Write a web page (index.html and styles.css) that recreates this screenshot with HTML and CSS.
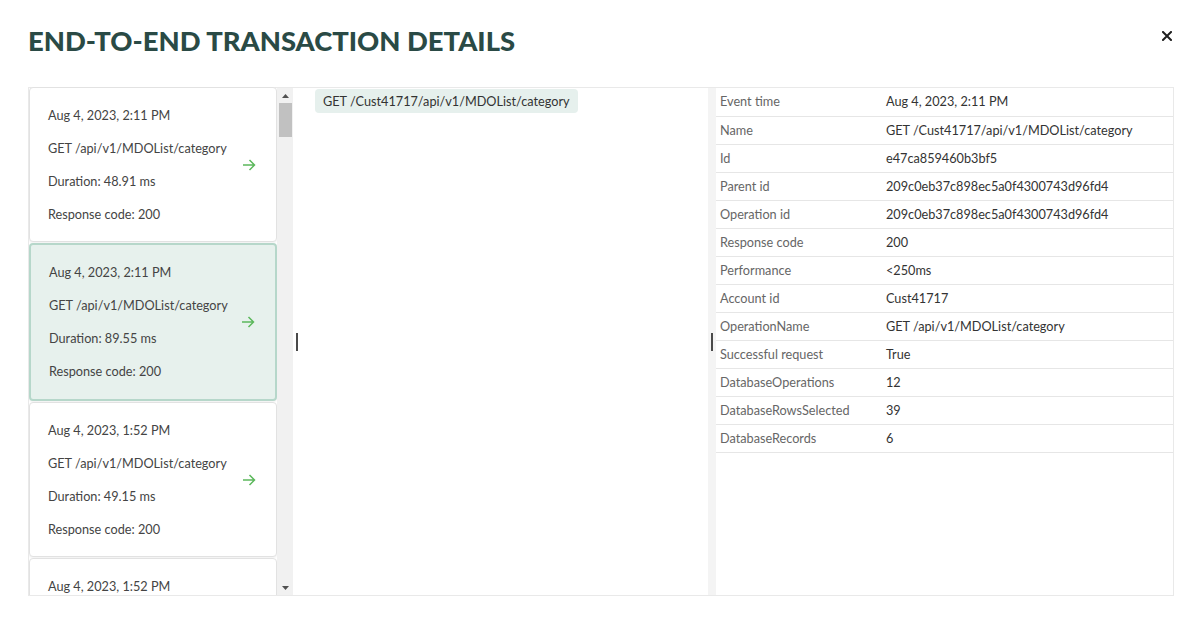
FILE: index.html
```html
<!DOCTYPE html>
<html lang="en">
<head>
<meta charset="utf-8">
<title>End-to-end transaction details</title>
<link rel="stylesheet" href="styles.css">
</head>
<body>
<div class="header">
  <h1 class="title">END-TO-END TRANSACTION DETAILS</h1>
  <button class="close" aria-label="Close">
    <svg width="10" height="10" viewBox="0 0 10 10"><path d="M1 1 L9 9 M9 1 L1 9" stroke="#1f1f1f" stroke-width="2" stroke-linecap="square"/></svg>
  </button>
</div>
<div class="frame">
  <div class="list">
    <div class="card">
      <div class="card-lines">
        <div class="line">Aug 4, 2023, 2:11 PM</div>
        <div class="line">GET /api/v1/MDOList/category</div>
        <div class="line">Duration: 48.91 ms</div>
        <div class="line">Response code: 200</div>
      </div>
      <svg class="arrow" width="14" height="12" viewBox="0 0 14 12"><path d="M1 6 H12.5 M7.5 1 L12.5 6 L7.5 11" fill="none" stroke="#5cb85c" stroke-width="1.5"/></svg>
    </div>
    <div class="card selected">
      <div class="card-lines">
        <div class="line">Aug 4, 2023, 2:11 PM</div>
        <div class="line">GET /api/v1/MDOList/category</div>
        <div class="line">Duration: 89.55 ms</div>
        <div class="line">Response code: 200</div>
      </div>
      <svg class="arrow" width="14" height="12" viewBox="0 0 14 12"><path d="M1 6 H12.5 M7.5 1 L12.5 6 L7.5 11" fill="none" stroke="#5cb85c" stroke-width="1.5"/></svg>
    </div>
    <div class="card">
      <div class="card-lines">
        <div class="line">Aug 4, 2023, 1:52 PM</div>
        <div class="line">GET /api/v1/MDOList/category</div>
        <div class="line">Duration: 49.15 ms</div>
        <div class="line">Response code: 200</div>
      </div>
      <svg class="arrow" width="14" height="12" viewBox="0 0 14 12"><path d="M1 6 H12.5 M7.5 1 L12.5 6 L7.5 11" fill="none" stroke="#5cb85c" stroke-width="1.5"/></svg>
    </div>
    <div class="card">
      <div class="card-lines">
        <div class="line">Aug 4, 2023, 1:52 PM</div>
        <div class="line">GET /api/v1/MDOList/category</div>
        <div class="line">Duration: 51.02 ms</div>
        <div class="line">Response code: 200</div>
      </div>
      <svg class="arrow" width="14" height="12" viewBox="0 0 14 12"><path d="M1 6 H12.5 M7.5 1 L12.5 6 L7.5 11" fill="none" stroke="#5cb85c" stroke-width="1.5"/></svg>
    </div>
  </div>
  <div class="scrollbar">
    <div class="sb-btn"><svg width="7" height="4" viewBox="0 0 7 4"><path d="M0 4 L3.5 0 L7 4 Z" fill="#505050"/></svg></div>
    <div class="sb-thumb"></div>
    <div class="sb-fill"></div>
    <div class="sb-btn"><svg width="7" height="4" viewBox="0 0 7 4"><path d="M0 0 L7 0 L3.5 4 Z" fill="#505050"/></svg></div>
  </div>
  <div class="gutter"><span class="handle"></span></div>
  <div class="middle">
    <span class="pill">GET /Cust41717/api/v1/MDOList/category</span>
  </div>
  <div class="gutter gutter-gray"><span class="handle"></span></div>
  <div class="details">
    <table class="props">
      <tr><td class="k">Event time</td><td class="v">Aug 4, 2023, 2:11 PM</td></tr>
      <tr><td class="k">Name</td><td class="v">GET /Cust41717/api/v1/MDOList/category</td></tr>
      <tr><td class="k">Id</td><td class="v">e47ca859460b3bf5</td></tr>
      <tr><td class="k">Parent id</td><td class="v">209c0eb37c898ec5a0f4300743d96fd4</td></tr>
      <tr><td class="k">Operation id</td><td class="v">209c0eb37c898ec5a0f4300743d96fd4</td></tr>
      <tr><td class="k">Response code</td><td class="v">200</td></tr>
      <tr><td class="k">Performance</td><td class="v">&lt;250ms</td></tr>
      <tr><td class="k">Account id</td><td class="v">Cust41717</td></tr>
      <tr><td class="k">OperationName</td><td class="v">GET /api/v1/MDOList/category</td></tr>
      <tr><td class="k">Successful request</td><td class="v">True</td></tr>
      <tr><td class="k">DatabaseOperations</td><td class="v">12</td></tr>
      <tr><td class="k">DatabaseRowsSelected</td><td class="v">39</td></tr>
      <tr><td class="k">DatabaseRecords</td><td class="v">6</td></tr>
    </table>
  </div>
</div>
</body>
</html>
```

FILE: styles.css
```css
* { box-sizing: border-box; }

html, body {
  margin: 0;
  padding: 0;
  background: #ffffff;
  font-family: Lato, "Liberation Sans", sans-serif;
  font-size: 12.7px;
  color: #444444;
}

.header {
  display: flex;
  justify-content: space-between;
  align-items: flex-start;
  height: 87px;
  padding: 24px 28px 0 28px;
}

.title {
  margin: 0;
  font-size: 27.4px;
  line-height: 34px;
  font-weight: 900;
  color: #2a4a45;
  letter-spacing: 0;
}

.close {
  margin-top: 7px;
  padding: 0;
  border: 0;
  background: none;
  width: 10px;
  height: 10px;
  display: flex;
  cursor: pointer;
}

.frame {
  display: flex;
  margin: 0 26px 0 28px;
  height: 509px;
  border: 1px solid #e9e9e9;
}

.list {
  width: 248px;
  flex: none;
  margin-top: -1px;
  overflow: hidden;
  display: flex;
  flex-direction: column;
}

.card {
  flex: none;
  height: 155px;
  margin-bottom: 1px;
  display: flex;
  align-items: center;
  justify-content: space-between;
  padding: 0 20px 0 18px;
  background: #ffffff;
  border: 1px solid #e2e2e2;
  border-radius: 4px;
  box-shadow: 0 1px 2px rgba(0, 0, 0, 0.06);
}

.card.selected {
  height: 158px;
  background: #e7f1ed;
  border: 2px solid #b6d7ca;
}

.card-lines {
  display: flex;
  flex-direction: column;
}

.line {
  height: 33px;
  line-height: 33px;
  color: #444444;
  white-space: nowrap;
}

.arrow { flex: none; }

.scrollbar {
  width: 16px;
  flex: none;
  background: #f1f1f1;
  display: flex;
  flex-direction: column;
  align-items: center;
}

.sb-btn {
  height: 15px;
  width: 16px;
  display: flex;
  align-items: center;
  justify-content: center;
}

.sb-thumb {
  width: 13px;
  height: 34px;
  background: #c1c1c1;
}

.sb-fill { flex: 1; }

.gutter {
  width: 7px;
  flex: none;
  display: flex;
  align-items: center;
  justify-content: center;
  background: #ffffff;
}

.gutter-gray {
  width: 8px;
  background: #f4f4f4;
  justify-content: flex-start;
  padding-left: 3px;
}

.handle {
  display: block;
  width: 2px;
  height: 18px;
  background: #4a4a4a;
}

.middle {
  width: 408px;
  flex: none;
  padding: 1px 0 0 15px;
  background: #ffffff;
}

.pill {
  display: inline-block;
  height: 24px;
  line-height: 24px;
  padding: 0 8px;
  border-radius: 4px;
  background: #e6f0ed;
  color: #333333;
  white-space: nowrap;
}

.details {
  flex: 1;
  background: #ffffff;
}

.props {
  width: 100%;
  border-collapse: collapse;
}

.props td {
  height: 28px;
  padding: 0 4px 1px 4px;
  border-bottom: 1px solid #e6e6e6;
  white-space: nowrap;
}

.props .k {
  width: 166px;
  color: #666666;
}

.props .v {
  color: #333333;
}
```
